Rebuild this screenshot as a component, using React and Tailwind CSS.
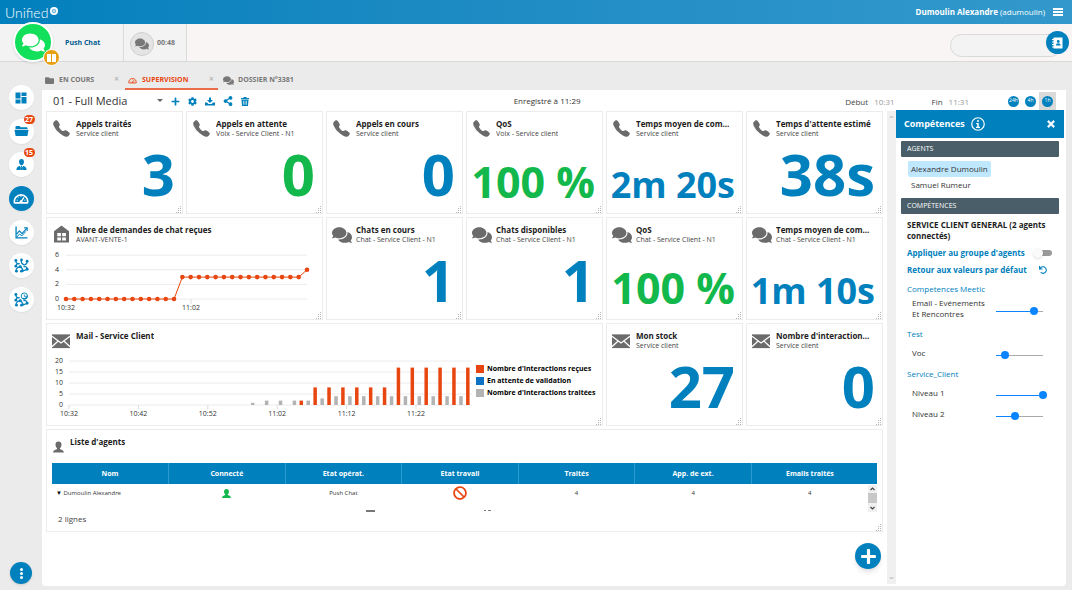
import React, { useState } from 'react';
import { FaBan, FaCog, FaComments, FaFolder, FaPlus, FaShareAlt, FaTimes, FaUndo } from 'react-icons/fa';
import { IoCall } from 'react-icons/io5';

const BLUE = '#0080bd';
const ORANGE = '#e84610';

/* ---------- Icons ---------- */

const GaugeIcon = ({ className }) => (
    <svg viewBox="0 0 24 16" className={className} fill="none" stroke="currentColor" aria-hidden="true">
        <path d="M2.2 14.5a10 10 0 1 1 19.6 0z" strokeWidth="2.4" strokeLinejoin="round" />
        <path d="M12 13l4-6" strokeWidth="2" strokeLinecap="round" />
        <circle cx="12" cy="12.5" r="2" fill="currentColor" stroke="none" />
        <path d="M5.5 10.5h1.6M7.5 6.2l1.1 1.1M12 4.4v1.5M17 10.5h1.6" strokeWidth="1.5" />
    </svg>
);

const DashboardIcon = ({ className }) => (
    <svg viewBox="0 0 24 24" className={className} fill="currentColor" aria-hidden="true">
        <path d="M1 1h10v12H1zM13 1h10v7H13zM1 15h10v8H1zM13 10h10v13H13z" />
    </svg>
);

const FolderOpenIcon = ({ className }) => (
    <svg viewBox="0 0 30 24" className={className} fill="currentColor" aria-hidden="true">
        <path d="M3 8V3.5Q3 2 4.5 2H11l2.5 2.5H25.5Q27 4.5 27 6v2z" />
        <path d="M1 9.5h28l-2 11.5q-.2 1-1.200 1H4.200q-1 0-1.200-1z" />
    </svg>
);

const AgentIcon = ({ className }) => (
    <svg viewBox="0 0 24 24" className={className} fill="currentColor" aria-hidden="true">
        <path d="M12 0c3.600 0 5.400 2.600 5.400 6 0 3.800-2.400 8-5.400 8s-5.400-4.200-5.400-8c0-3.400 1.800-6 5.400-6z" />
        <path d="M1 24c0-5.500 1.800-7.200 7.500-8.800l2.300 3.600-.8 5.200zM23 24c0-5.500-1.800-7.200-7.500-8.800l-2.300 3.600.8 5.200z" />
        <path d="M10.600 15.500h2.800l-.7 2.400.9 6.100h-3.200l.9-6.100z" />
    </svg>
);

const BustIcon = ({ className }) => (
    <svg viewBox="0 0 24 24" className={className} fill="currentColor" aria-hidden="true">
        <path d="M12 0c4.500 0 6.500 2.700 6.500 6.800 0 3.400-1.300 6.400-3.300 7.900v1.500c1.500 1.400 8.300 2 8.800 7.800H0c.5-5.800 7.300-6.400 8.800-7.800v-1.500C6.800 13.200 5.500 10.200 5.500 6.800 5.500 2.700 7.500 0 12 0z" />
    </svg>
);

const TrendIcon = ({ className }) => (
    <svg viewBox="0 0 24 24" className={className} fill="none" stroke="currentColor" aria-hidden="true">
        <path d="M2 1v21h21" strokeWidth="2.400" />
        <path d="M3 15l5-6 5 5 9-10" strokeWidth="2.200" />
        <path d="M3 21l5-6 5 3 7-8" strokeWidth="1.800" />
        <path d="M17 3.500h5.500V9" strokeWidth="2" />
    </svg>
);

const FlowIcon = ({ className, withClock }) => (
    <svg viewBox="0 0 24 24" className={className} fill="none" stroke="currentColor" strokeWidth="2" aria-hidden="true">
        <path d="M3 4c0 4 2 6 6 5M9 9c-5-1-6 3-6 5M3 20c1-4 4-6 7-6M10 14c4 0 2 6 6 7" />
        <path d="M14 10c3 2 7 0 7-4M15 14c3-1 6 0 6 4M12 20c4 1 7-1 9-2" />
        {withClock
            ? <><circle cx="16.500" cy="6.500" r="5" strokeWidth="1.500" /><path d="M16.500 4v3H19" strokeWidth="1.300" /></>
            : <><path d="M12 3c-1 4 0 6 3 7" /><circle cx="12" cy="3" r="2.200" fill="currentColor" stroke="none" /></>}
        <g fill="currentColor" stroke="none">
            <circle cx="3" cy="4" r="2.300" />
            <circle cx="3" cy="13" r="2.300" />
            <circle cx="4" cy="21" r="2.300" />
            <circle cx="10" cy="14" r="2.300" />
            <circle cx="12" cy="21" r="2.300" />
            <circle cx="21" cy="18" r="2.300" />
            {!withClock && <circle cx="21" cy="5" r="2.300" />}
        </g>
    </svg>
);

const HouseIcon = ({ className }) => (
    <svg viewBox="0 0 16 18" className={className} aria-hidden="true">
        <path d="M8 0l8 6v12H0V6z" fill="currentColor" />
        <path d="M3.500 8h4v3.500h-4zM8.700 8h4v3.500h-4zM3.500 12.700h4V16h-4zM8.700 12.700h4V16h-4z" fill="#fff" />
    </svg>
);

const MailIcon = ({ className }) => (
    <svg viewBox="0 0 19 16" className={className} aria-hidden="true">
        <path d="M0 1h19v14.500H0z" fill="currentColor" />
        <path d="M0 3l9.500 7L19 3M0 14l6.500-6M19 14l-6.500-6" fill="none" stroke="#fff" strokeWidth="1.300" />
    </svg>
);

const DownloadIcon = ({ className }) => (
    <svg viewBox="0 0 20 18" className={className} fill="currentColor" aria-hidden="true">
        <path d="M8 1h4v5h4l-6 6-6-6h4z" />
        <path d="M0 11h4l3 3h6l3-3h4v6H0z" />
    </svg>
);

const TrashIcon = ({ className }) => (
    <svg viewBox="0 0 16 18" className={className} aria-hidden="true">
        <path d="M0 2h5V0h6v2h5v2.500H0zM1 5.500h14L14 18H2z" fill="currentColor" />
        <path d="M5 7.500v8M8 7.500v8M11 7.500v8" stroke="#fff" strokeWidth="1.200" />
    </svg>
);

const ContactsIcon = ({ className }) => (
    <svg viewBox="0 0 22 24" className={className} aria-hidden="true">
        <path d="M3 1h18v22H3z" fill="#fff" />
        <path d="M0 5h5M0 10h5M0 15h5M0 20h5" stroke="#fff" strokeWidth="2" />
        <circle cx="12.500" cy="9" r="2.800" fill={BLUE} />
        <path d="M7.500 17q0-4.500 5-4.500t5 4.500z" fill={BLUE} />
    </svg>
);

const InfoIcon = ({ className }) => (
    <svg viewBox="0 0 28 28" className={className} aria-hidden="true">
        <circle cx="14" cy="14" r="12.500" fill="none" stroke="currentColor" strokeWidth="2.400" />
        <circle cx="14" cy="7.800" r="2" fill="currentColor" />
        <path d="M10.500 12h5v7.500h2.500V22h-8v-2.500h2.500v-5h-2z" fill="currentColor" />
    </svg>
);

const WidgetIcon = ({ type }) => {
    switch (type) {
        case 'phone':
            return <IoCall className="w-[19px] h-[19px]" />;
        case 'chat':
            return <FaComments className="w-5 h-5" />;
        case 'house':
            return <HouseIcon className="w-[15px] h-[18px] ml-[2px]" />;
        case 'mail':
            return <MailIcon className="w-[18px] h-[16px] mt-[2px]" />;
        default:
            return <BustIcon className="w-[11px] h-[12px] ml-px mt-[4px]" />;
    }
};

const Grip = () => (
    <svg viewBox="0 0 7 7" className="absolute right-0 bottom-0 w-[7px] h-[7px]" fill="#b5b5b5" aria-hidden="true">
        <path d="M5 0h1v1H5zM5 2h1v1H5zM3 2h1v1H3zM5 4h1v1H5zM3 4h1v1H3zM5 6h1v1H5zM3 6h1v1H3zM1 6h1v1H1z" />
    </svg>
);

/* ---------- Widgets ---------- */

const Widget = ({ icon, title, subtitle, className = '', children }) => (
    <section className={`relative flex flex-col min-w-0 border border-[#ececec] bg-white ${className}`}>
        <header className="flex h-[30px] shrink-0 gap-1 pl-[5px] pr-[7px] pt-[7px] text-[#6b6b6b]">
            <span className={icon === 'agent' ? 'w-[14px] shrink-0' : 'w-5 shrink-0'}><WidgetIcon type={icon} /></span>
            <div className="min-w-0">
                <h2 className="truncate text-[8px] leading-[10px] font-bold text-[#1c1c1c]">{title}</h2>
                {subtitle && <p className="truncate text-[7px] leading-[10px] text-[#444]">{subtitle}</p>}
            </div>
        </header>
        {children}
        <Grip />
    </section>
);

const valueSizes = {
    lg: 'text-[58px]',
    md: 'text-[43px]',
    sm: 'text-[36px]',
};

const Counter = ({ value, size = 'lg', green, ...rest }) => (
    <Widget {...rest}>
        <p className={`mt-auto pr-[7px] pb-[10px] text-right leading-none font-bold whitespace-nowrap ${valueSizes[size]} ${green ? 'text-[#12b84b]' : 'text-[#0080bd]'}`}>
            {value}
        </p>
    </Widget>
);

const calls = [
    { title: 'Appels traités', subtitle: 'Service client', value: '3' },
    { title: 'Appels en attente', subtitle: 'Voix - Service Client - N1', value: '0', green: true },
    { title: 'Appels en cours', subtitle: 'Service client', value: '0' },
    { title: 'QoS', subtitle: 'Voix - Service client', value: '100 %', size: 'md', green: true },
    { title: 'Temps moyen de com…', subtitle: 'Service client', value: '2m 20s', size: 'sm' },
    { title: "Temps d'attente estimé", subtitle: 'Service client', value: '38s' },
];

const chats = [
    { title: 'Chats en cours', subtitle: 'Chat - Service Client - N1', value: '1' },
    { title: 'Chats disponibles', subtitle: 'Chat - Service Client - N1', value: '1' },
    { title: 'QoS', subtitle: 'Chat - Service Client - N1', value: '100 %', size: 'md', green: true },
    { title: 'Temps moyen de com…', subtitle: 'Chat - Service Client - N1', value: '1m 10s', size: 'sm' },
];

const chatRequests = [...Array(14).fill(0), ...Array(15).fill(3), 4];

const ChatRequestsChart = () => {
    const x = (i) => 19 + (i * 241) / (chatRequests.length - 1);
    const y = (v) => 51 - v * 7.3;

    return (
        <svg viewBox="0 0 275 70" className="block w-full" fontSize="7" fill="#333" role="img" aria-label="Nbre de demandes de chat reçues">
            {[0, 2, 4, 6].map((v) => (
                <g key={v}>
                    <path d={`M19 ${y(v)}H260`} stroke="#ececec" />
                    <text x="12" y={y(v) + 2} textAnchor="end">{v}</text>
                </g>
            ))}
            <path d="M144 51v5" stroke="#ddd" />
            <polyline points={chatRequests.map((v, i) => `${x(i)},${y(v)}`).join(' ')} fill="none" stroke={ORANGE} />
            {chatRequests.map((v, i) => <circle key={i} cx={x(i)} cy={y(v)} r="2.300" fill={ORANGE} />)}
            <text x="19" y="62" textAnchor="middle">10:32</text>
            <text x="144" y="62" textAnchor="middle">11:02</text>
        </svg>
    );
};

// un point toutes les deux minutes, à partir de 10:58
const mails = [
    [0, 1], [0, 2], [0, 2], [0, 2], [2, 2], [8, 3], [8, 4], [8, 4], [8, 4], [8, 4], [8, 4],
    [17, 4], [17, 4], [17, 4], [17, 4], [17, 4], [17, 0],
];

const MailChart = () => {
    const y = (v) => 51 - v * 2.2;

    return (
        <svg viewBox="0 0 429 72" className="block w-[429px] shrink-0" fontSize="7" fill="#333" role="img" aria-label="Mail - Service Client">
            {[0, 5, 10, 15, 20].map((v) => (
                <g key={v}>
                    <path d={`M22 ${y(v)}H425`} stroke="#ececec" />
                    <text x="16" y={y(v) + 2} textAnchor="end">{v}</text>
                </g>
            ))}
            {['10:32', '10:42', '10:52', '11:02', '11:12', '11:22'].map((label, i) => (
                <g key={label}>
                    <path d={`M${22 + i * 69.4} 51v4`} stroke="#ddd" />
                    <text x={22 + i * 69.4} y="62" textAnchor="middle">{label}</text>
                </g>
            ))}
            {mails.map(([received, handled], i) => {
                const x = 204 + i * 13.88;
                return (
                    <g key={i}>
                        <rect x={x - 7} y={y(received)} width="3.500" height={51 - y(received)} fill={ORANGE} />
                        <rect x={x} y={y(handled)} width="3.500" height={51 - y(handled)} fill="#b3b3b3" />
                    </g>
                );
            })}
        </svg>
    );
};

const legend = [
    { label: "Nombre d'interactions reçues", color: 'bg-[#e84610]' },
    { label: 'En attente de validation', color: 'bg-[#0b72c4]' },
    { label: "Nombre d'interactions traitées", color: 'bg-[#b3b3b3]' },
];

const columns = ['Nom', 'Connecté', 'Etat opérat.', 'Etat travail', 'Traités', 'App. de ext.', 'Emails traités'];

const AgentsTable = () => (
    <div className="mx-[5px] mt-[3px] h-[49px] shrink-0 overflow-hidden">
        <table className="w-full table-fixed border-collapse text-center text-[6px] leading-[10px] text-[#333]">
            <thead>
                <tr className="h-[21px] bg-[#0080bd] text-[7px] text-white">
                    {columns.map((column, i) => (
                        <th key={column} className={i ? 'border-l border-[#2b9bd0] font-bold' : 'font-bold'}>{column}</th>
                    ))}
                    <th className="w-[9px]" aria-label="Défilement"></th>
                </tr>
            </thead>
            <tbody>
                <tr className="h-[18px]">
                    <td className="pl-1 text-left">
                        <span className="text-black">▼</span> Dumoulin Alexandre
                    </td>
                    <td><BustIcon className="mx-auto w-[9px] h-[9px] text-[#12b84b]" /></td>
                    <td>Push Chat</td>
                    <td><FaBan className="mx-auto w-[14px] h-[14px] text-[#e84610]" /></td>
                    <td>4</td>
                    <td>4</td>
                    <td>4</td>
                    <td rowSpan="2" className="align-top">
                        <svg viewBox="0 0 9 27" className="mt-px block w-[9px] h-[27px]" aria-hidden="true">
                            <path d="M0 0h9v27H0z" fill="#f0f0f0" />
                            <path d="M0 8h9v10H0z" fill="#c8c8c8" />
                            <path d="M2.500 5l2-2 2 2M2.500 22l2 2 2-2" fill="none" stroke="#444" strokeWidth="1.200" />
                        </svg>
                    </td>
                </tr>
                <tr className="h-[18px]">
                    <td></td>
                    <td></td>
                    <td className="pt-2 align-top"><span className="ml-[81px] block h-[2px] w-[9px] bg-[#777]"></span></td>
                    <td className="pt-2 align-top">
                        <span className="ml-[82px] flex gap-[2px]">
                            <span className="h-px w-[2px] bg-[#777]"></span>
                            <span className="h-px w-[3px] bg-[#777]"></span>
                        </span>
                    </td>
                    <td></td>
                    <td></td>
                    <td></td>
                </tr>
            </tbody>
        </table>
    </div>
);

/* ---------- Skills panel ---------- */

const SkillSlider = ({ label, initial }) => {
    const [value, setValue] = useState(initial);

    return (
        <label className="flex items-center justify-between pl-4 pr-[17px] text-[8px] leading-[11px] text-[#333]">
            <span className="w-[76px]">{label}</span>
            <input
                type="range"
                value={value}
                onChange={(e) => setValue(Number(e.target.value))}
                className="mt-[6px] h-2 w-[55px] appearance-none bg-transparent bg-[length:47px_1px] bg-center bg-no-repeat [&::-webkit-slider-thumb]:size-2 [&::-webkit-slider-thumb]:appearance-none [&::-webkit-slider-thumb]:rounded-full [&::-webkit-slider-thumb]:bg-[#0a84ff]"
                style={{ backgroundImage: `linear-gradient(to right, #0a84ff ${value}%, #aaa ${value}%)` }}
            />
        </label>
    );
};

const SkillsPanel = () => (
    <aside className="-mt-px mr-[2px] w-[168px] shrink-0 bg-white">
        <div className="flex h-7 items-center bg-[#0080bd] px-2 text-white">
            <h2 className="text-[9px] font-bold">Compétences</h2>
            <InfoIcon className="ml-[6px] w-[14px] h-[14px]" />
            <button className="ml-auto" aria-label="Fermer"><FaTimes className="w-[10px] h-[10px]" stroke="currentColor" strokeWidth="30" /></button>
        </div>
        <h3 className="mx-[5px] mt-[3px] h-4 rounded-[1px] bg-[#4a5e69] px-[6px] text-[7px] leading-[16px] text-white">AGENTS</h3>
        <ul className="mt-1 ml-3 text-[8px] leading-[16px] text-[#333]">
            <li><button className="rounded-xs bg-[#bfe8ff] px-[3px]">Alexandre Dumoulin</button></li>
            <li><button className="px-[3px]">Samuel Rumeur</button></li>
        </ul>
        <h3 className="mx-[5px] mt-[5px] h-4 rounded-[1px] bg-[#4a5e69] px-[6px] text-[7px] leading-[16px] text-white">COMPÉTENCES</h3>
        <p className="mt-[5px] px-[11px] text-[8px] leading-[11px] font-bold text-[#1c1c1c]">SERVICE CLIENT GENERAL (2 agents connectés)</p>
        <label className="mt-[3px] flex h-[17px] items-center justify-between pl-[11px] pr-3 text-[8px] font-bold text-[#0080bd]">
            Appliquer au groupe d'agents
            <input
                type="checkbox"
                className="relative h-[6px] w-[18px] appearance-none rounded-full bg-[#999] before:absolute before:-top-[2px] before:-left-px before:size-[10px] before:rounded-full before:bg-[#fafafa] before:shadow-sm checked:bg-[#0080bd] checked:before:left-[9px]"
            />
        </label>
        <button className="flex h-[17px] w-full items-center justify-between pl-[11px] pr-[17px] text-[8px] font-bold text-[#0080bd]">
            Retour aux valeurs par défaut
            <FaUndo className="w-2 h-2" />
        </button>
        <h4 className="mt-[5px] px-[11px] text-[8px] leading-[12px] text-[#0080bd]">Competences Meetic</h4>
        <div className="mt-[2px]"><SkillSlider label="Email - Evénements Et Rencontres" initial={80} /></div>
        <h4 className="mt-[9px] px-[11px] text-[8px] leading-[12px] text-[#0080bd]">Test</h4>
        <div className="mt-[5px]"><SkillSlider label="Voc" initial={20} /></div>
        <h4 className="mt-[9px] px-[11px] text-[8px] leading-[12px] text-[#0080bd]">Service_Client</h4>
        <div className="mt-[5px] flex flex-col gap-[7px]">
            <SkillSlider label="Niveau 1" initial={100} />
            <SkillSlider label="Niveau 2" initial={40} />
        </div>
    </aside>
);

/* ---------- Chrome ---------- */

const navItems = [
    { label: 'Accueil', icon: <DashboardIcon className="w-3 h-3" /> },
    { label: 'Dossiers', icon: <FolderOpenIcon className="w-[15px] h-3" />, badge: 27 },
    { label: 'Agents', icon: <AgentIcon className="w-[11px] h-[13px]" />, badge: 15 },
    { label: 'Supervision', icon: <GaugeIcon className="w-4 h-[11px]" />, active: true },
    { label: 'Statistiques', icon: <TrendIcon className="w-[13px] h-[13px]" /> },
    { label: 'Scénarios', icon: <FlowIcon className="w-[15px] h-[15px]" /> },
    { label: 'Planification', icon: <FlowIcon withClock className="w-[15px] h-[15px]" /> },
];

const Sidebar = () => (
    <nav className="flex w-[42px] shrink-0 flex-col items-center pt-[23px] pb-[6px]">
        <div className="flex h-[227px] flex-col justify-between">
            {navItems.map(({ label, icon, badge, active }) => (
                <button
                    key={label}
                    title={label}
                    className={`relative flex size-[25px] items-center justify-center rounded-full shadow-xs ${active ? 'bg-[#0080bd] text-white' : 'bg-white text-[#0080bd]'}`}
                >
                    {icon}
                    {badge && (
                        <span className="absolute -top-[4px] -right-px flex h-[9px] w-[11px] items-center justify-center rounded-full bg-[#e84610] text-[7px] leading-none font-bold text-white">
                            {badge}
                        </span>
                    )}
                </button>
            ))}
        </div>
        <button className="mt-auto flex size-[22px] flex-col items-center justify-center gap-px rounded-full bg-[#0080bd] shadow-sm" aria-label="Plus d'options">
            <span className="size-[3px] rounded-full bg-white"></span>
            <span className="size-[3px] rounded-full bg-white"></span>
            <span className="size-[3px] rounded-full bg-white"></span>
        </button>
    </nav>
);

const TopBar = () => (
    <header className="flex h-6 shrink-0 items-center justify-between bg-linear-to-r from-[#0080bd] to-[#3399cc] pl-[5px] pr-[9px] text-white">
        <div className="flex items-center gap-[2px] pt-px">
            <span className="font-[Lato] text-[14px] leading-none font-light">Unified</span>
            <svg viewBox="0 0 16 16" className="mb-1 w-2 h-2" aria-hidden="true">
                <circle cx="8" cy="8" r="8" fill="#fff" />
                <circle cx="8" cy="8" r="3.500" fill="none" stroke={BLUE} strokeWidth="1.200" />
                <path d="M6 8h4" stroke={BLUE} />
            </svg>
        </div>
        <div className="flex items-center gap-2 text-[8px]">
            <span><b>Dumoulin Alexandre</b> (adumoulin)</span>
            <button className="flex flex-col gap-px" aria-label="Menu">
                <span className="h-[2px] w-[10px] bg-white"></span>
                <span className="h-[2px] w-[10px] bg-white"></span>
                <span className="h-[2px] w-[10px] bg-white"></span>
            </button>
        </div>
    </header>
);

const StatusBar = () => (
    <div className="relative flex h-[38px] shrink-0 items-stretch border-b border-[#d9d9d9] bg-[#f8f5f4]">
        <button className="absolute top-[-2px] left-[13px] flex size-10 items-center justify-center rounded-full border-2 border-white bg-[#12e05a] shadow-sm" aria-label="Push Chat">
            <FaComments className="w-[23px] h-[23px] text-white" />
        </button>
        <button className="absolute top-[25px] left-[43px] flex size-[17px] items-center justify-center gap-px rounded-full border border-white bg-[#e6a012]" aria-label="Pause">
            <span className="h-2 w-1 bg-white"></span>
            <span className="h-2 w-1 bg-white"></span>
        </button>
        <div className="flex w-[124px] items-center border-r border-[#dcdcdc] bg-[#f3f3f3] pt-[2px] pl-[65px] text-[7px] font-bold text-[#005b8f]">Push Chat</div>
        <div className="flex w-[63px] items-center gap-[3px] border-r border-[#dcdcdc] bg-[#f3f3f3] pt-[2px] pl-[6px] text-[7px] font-bold text-[#777]">
            <span className="flex size-[24px] items-center justify-center rounded-full border border-[#d0d0d0] bg-[#e4e4e4]">
                <FaComments className="w-[14px] h-[14px]" />
            </span>
            00:48
        </div>
        <div className="relative my-auto mr-[3px] ml-auto h-[23px] w-[119px]">
            <input aria-label="Recherche" className="h-full w-[112px] rounded-full border border-[#d9d9d9] bg-[#f3f3f3] pr-6 pl-3 text-[8px] outline-none" />
            <button className="absolute top-0 right-0 flex size-[23px] items-center justify-center rounded-full bg-[#0080bd]" aria-label="Contacts">
                <ContactsIcon className="w-[11px] h-3" />
            </button>
        </div>
    </div>
);

const Tabs = () => (
    <div className="flex h-[28px] shrink-0 items-end pl-[42px] text-[7px] font-bold text-[#777]">
        <button className="flex h-5 w-[70px] items-center gap-[5px] pt-px pl-[3px]">
            <FaFolder className="w-[9px] h-[9px]" /> EN COURS
        </button>
        <button className="h-5 w-[13px] pb-1 pl-[2px] text-left text-[9px] leading-none font-normal text-[#aaa]" aria-label="Fermer EN COURS">×</button>
        <div className="flex h-5 w-[93px] border-b-2 border-[#ec6a4c] text-[#e84610]">
            <button className="flex items-center gap-[5px] pt-[3px] pl-[3px]"><GaugeIcon className="w-[9px] h-[7px]" /> SUPERVISION</button>
            <button className="ml-auto pr-1 pb-[2px] text-[9px] leading-none font-normal text-[#aaa]" aria-label="Fermer SUPERVISION">×</button>
        </div>
        <button className="flex h-5 items-center gap-1 pt-px pl-[5px]">
            <FaComments className="w-[11px] h-[11px]" /> DOSSIER N°3381
        </button>
    </div>
);

const Toolbar = () => {
    const [range, setRange] = useState('1h');

    return (
        <div className="flex h-[21px] shrink-0 items-center pt-px pr-[10px] pl-[11px] text-[8px]">
            <div className="relative">
                <select aria-label="Tableau de bord" className="w-[112px] appearance-none bg-transparent text-[11px] leading-[20px] text-[#333]">
                    <option>01 - Full Media</option>
                </select>
                <span className="pointer-events-none absolute top-[8px] right-[2px] border-x-[3px] border-t-[3px] border-x-transparent border-t-[#666]"></span>
            </div>
            <div className="ml-[6px] flex items-center gap-2 text-[#0080bd]">
                <button aria-label="Ajouter"><FaPlus className="w-[9px] h-[9px]" /></button>
                <button aria-label="Configurer"><FaCog className="w-[9px] h-[9px]" /></button>
                <button aria-label="Télécharger"><DownloadIcon className="w-[10px] h-[9px]" /></button>
                <button aria-label="Partager"><FaShareAlt className="w-[10px] h-[10px]" /></button>
                <button aria-label="Supprimer"><TrashIcon className="w-2 h-[9px]" /></button>
            </div>
            <p className="flex-1 text-center text-[#333]">Enregistré à 11:29</p>
            <p className="mr-[37px] flex gap-[6px] pt-px text-[#444]">Début <span className="text-[#999]">10:31</span></p>
            <p className="mr-[36px] flex gap-[6px] pt-px text-[#444]">Fin <span className="text-[#999]">11:31</span></p>
            {['24h', '4h', '1h'].map((label) => (
                <button
                    key={label}
                    onClick={() => setRange(label)}
                    className={`flex h-[18px] w-[17px] items-center justify-center ${range === label ? 'bg-[#d9d9d9]' : ''}`}
                >
                    <span className="flex size-[11px] items-center justify-center rounded-full bg-[#0080bd] text-[5px] text-white">{label}</span>
                </button>
            ))}
        </div>
    );
};

const Dashboard = () => (
    <div className="grid min-w-0 flex-1 auto-rows-[103px] grid-cols-6 content-start gap-[3px] pl-1 pr-1">
        {calls.map((item) => <Counter key={item.title} icon="phone" {...item} />)}

        <Widget icon="house" title="Nbre de demandes de chat reçues" subtitle="AVANT-VENTE-1" className="col-span-2">
            <ChatRequestsChart />
        </Widget>
        {chats.map((item) => <Counter key={item.title} icon="chat" {...item} />)}

        <Widget icon="mail" title="Mail - Service Client" className="col-span-4">
            <div className="flex items-start">
                <MailChart />
                <ul className="pt-[9px] text-[7px] leading-[12px] font-bold whitespace-nowrap text-black">
                    {legend.map(({ label, color }) => (
                        <li key={label} className="flex items-center gap-[3px]">
                            <span className={`size-2 ${color}`}></span>{label}
                        </li>
                    ))}
                </ul>
            </div>
        </Widget>
        <Counter icon="mail" title="Mon stock" subtitle="Service client" value="27" />
        <Counter icon="mail" title="Nombre d'interaction…" subtitle="Service client" value="0" />

        <Widget icon="agent" title="Liste d'agents" className="col-span-6">
            <AgentsTable />
            <p className="pl-[11px] text-[8px] leading-[14px] text-[#444]">2 lignes</p>
        </Widget>
    </div>
);

const App = () => (
    <div className="flex h-screen flex-col overflow-hidden bg-[#ebebeb] font-['Open_Sans',sans-serif]">
        <TopBar />
        <StatusBar />
        <div className="flex min-h-0 flex-1">
            <Sidebar />
            <div className="-ml-[42px] flex min-w-0 flex-1 flex-col pointer-events-none">
                <div className="pointer-events-auto"><Tabs /></div>
                <main className="pointer-events-auto relative mr-[6px] mb-1 ml-[42px] flex min-h-0 flex-1 flex-col rounded-b bg-white">
                    <Toolbar />
                    <div className="flex min-h-0 flex-1">
                        <Dashboard />
                        <div className="mb-[2px] flex w-[9px] shrink-0 flex-col items-center justify-between bg-[#f0f0f0] py-1 text-[#999]" aria-hidden="true">
                            <svg viewBox="0 0 6 4" className="w-[5px] h-[4px]" fill="none" stroke="currentColor"><path d="M1 3l2-2 2 2" /></svg>
                            <svg viewBox="0 0 6 4" className="w-[5px] h-[4px]" fill="none" stroke="currentColor"><path d="M1 1l2 2 2-2" /></svg>
                        </div>
                        <SkillsPanel />
                    </div>
                    <button className="absolute right-[185px] bottom-[17px] flex size-[26px] items-center justify-center rounded-full bg-[#0080bd] text-white shadow-md" aria-label="Ajouter un widget">
                        <FaPlus className="w-[17px] h-[17px]" />
                    </button>
                </main>
            </div>
        </div>
    </div>
);

export default App;
